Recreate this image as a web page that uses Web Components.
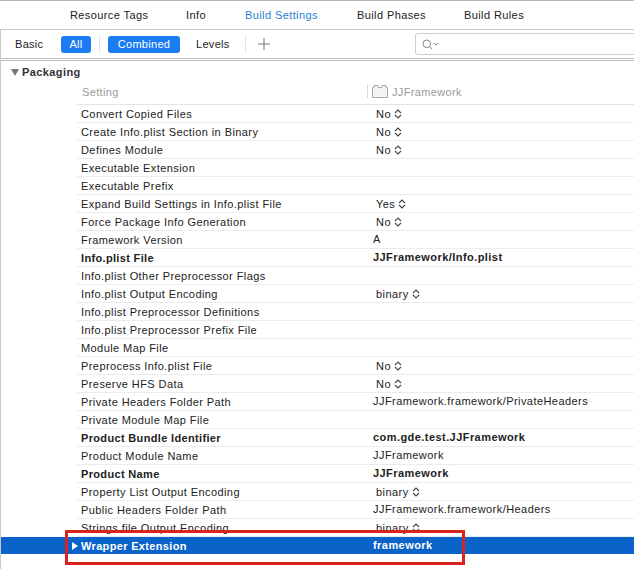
<!DOCTYPE html>
<html>
<head>
<meta charset="utf-8">
<style>
  html, body { margin: 0; background: #fff; }
  body { width: 634px; height: 569px; overflow: hidden; font-family: "Liberation Sans", Arial, sans-serif; font-size: 11px; color: #222; }
</style>
</head>
<body>
<build-settings>
  <tab-bar></tab-bar>
  <filter-bar></filter-bar>
  <settings-table></settings-table>
</build-settings>
<script>
const STEPPER = `<svg width="8" height="10" viewBox="0 0 8 10" fill="none" stroke="#444" stroke-width="1.1"><path d="M1 4L4 1L7 4M1 6L4 9L7 6"/></svg>`;

class BuildSettings extends HTMLElement {
  constructor() {
    super();
    this.attachShadow({ mode: "open" });
    this.shadowRoot.innerHTML = `
      <style>
        :host { display: block; position: relative; width: 634px; height: 569px; overflow: hidden; box-sizing: border-box; border-top: 1px solid #b5b5b5; }
        .mark { position: absolute; left: 65px; top: 529px; width: 400px; height: 35px; box-sizing: border-box; border: 3px solid #d9231f; }
      </style>
      <slot></slot>
      <div class="mark"></div>`;
  }
}

class TabBar extends HTMLElement {
  constructor() {
    super();
    this.attachShadow({ mode: "open" });
    this.shadowRoot.innerHTML = `
      <style>
        :host { display: block; height: 28px; border-bottom: 1px solid #c8c8c8; }
        .tabs { display: flex; padding-left: 70px; height: 28px; align-items: center; }
        span { letter-spacing: .4px; white-space: nowrap; }
        .on { color: #2a7fd0; }
      </style>
      <div class="tabs">
        <span style="width:116px">Resource Tags</span>
        <span style="width:59px">Info</span>
        <span class="on" style="width:112px">Build Settings</span>
        <span style="width:107px">Build Phases</span>
        <span>Build Rules</span>
      </div>`;
  }
}

class FilterBar extends HTMLElement {
  constructor() {
    super();
    this.attachShadow({ mode: "open" });
    this.shadowRoot.innerHTML = `
      <style>
        :host { display: flex; align-items: center; height: 31px; box-sizing: border-box; padding-left: 14px; border-left: 1px solid #c8c8c8; border-bottom: 3px double #bdbdbd; }
        span { letter-spacing: .3px; white-space: nowrap; }
        .pill { background: #1a7cf0; color: #fff; border-radius: 3px; height: 17px; line-height: 17px; text-align: center; box-sizing: border-box; }
        .sep { width: 1px; height: 16px; background: #e2e2e2; }
        .search { flex: 1; height: 22px; box-sizing: border-box; border: 1px solid #cfcfcf; border-right: 0; border-radius: 3px 0 0 3px; display: flex; align-items: center; padding-left: 6px; }
      </style>
      <span style="width:46px">Basic</span>
      <span class="pill" style="width:30px">All</span>
      <div class="sep" style="margin:0 8px"></div>
      <span class="pill" style="width:72px">Combined</span>
      <span style="margin-left:16px;width:50px">Levels</span>
      <div class="sep" style="margin-left:-1px"></div>
      <svg style="margin-left:12px" width="12" height="12" viewBox="0 0 12 12" stroke="#777" stroke-width="1"><path d="M6 0V12M0 6H12"/></svg>
      <div class="search" style="margin-left:145px">
        <svg width="17" height="11" viewBox="0 0 17 11" fill="none" stroke="#888" stroke-width="1"><circle cx="4.8" cy="4.8" r="3.8"/><path d="M7.5 7.5L10 10M12 4L14 6.2L16 4"/></svg>
      </div>`;
  }
}

class SettingRow extends HTMLElement {
  constructor() {
    super();
    this.attachShadow({ mode: "open" });
  }
  connectedCallback() {
    const val = this.getAttribute("value") || "";
    const stepper = this.hasAttribute("stepper");
    this.shadowRoot.innerHTML = `
      <style>
        :host { display: flex; height: 18px; box-sizing: border-box; align-items: center; margin-left: 76px; padding-left: 4px; border-bottom: 1px solid #ececec; white-space: nowrap; }
        :host([bold]) { font-weight: bold; }
        :host([selected]) { margin-left: 0; padding-left: 71px; background: #0a63c9; color: #fff; border-bottom: 0; height: 17px; }
        .name { width: 292px; letter-spacing: .42px; }
        :host([bold]) .name { letter-spacing: .34px; }
        .val { display: flex; align-items: center; gap: 3px; letter-spacing: .44px; padding-left: ${stepper ? 3 : 0}px; margin-bottom: ${stepper ? 0 : 2}px; }
        .tri { width: 0; height: 0; border-left: 6px solid #fff; border-top: 4px solid transparent; border-bottom: 4px solid transparent; margin-right: 3px; }
      </style>
      ${this.hasAttribute("selected") ? '<div class="tri"></div>' : ""}
      <div class="name"><slot></slot></div>
      <div class="val">${val}${stepper ? STEPPER : ""}</div>`;
  }
}

class SettingsTable extends HTMLElement {
  constructor() {
    super();
    this.attachShadow({ mode: "open" });
    const rows = [
      ["Convert Copied Files", "No", "s"],
      ["Create Info.plist Section in Binary", "No", "s"],
      ["Defines Module", "No", "s"],
      ["Executable Extension", ""],
      ["Executable Prefix", ""],
      ["Expand Build Settings in Info.plist File", "Yes", "s"],
      ["Force Package Info Generation", "No", "s"],
      ["Framework Version", "A"],
      ["Info.plist File", "JJFramework/Info.plist", "b"],
      ["Info.plist Other Preprocessor Flags", ""],
      ["Info.plist Output Encoding", "binary", "s"],
      ["Info.plist Preprocessor Definitions", ""],
      ["Info.plist Preprocessor Prefix File", ""],
      ["Module Map File", ""],
      ["Preprocess Info.plist File", "No", "s"],
      ["Preserve HFS Data", "No", "s"],
      ["Private Headers Folder Path", "JJFramework.framework/PrivateHeaders"],
      ["Private Module Map File", ""],
      ["Product Bundle Identifier", "com.gde.test.JJFramework", "b"],
      ["Product Module Name", "JJFramework"],
      ["Product Name", "JJFramework", "b"],
      ["Property List Output Encoding", "binary", "s"],
      ["Public Headers Folder Path", "JJFramework.framework/Headers"],
      ["Strings file Output Encoding", "binary", "s"],
      ["Wrapper Extension", "framework", "bx"],
    ];
    const html = rows.map(([name, val, f = ""]) => {
      const attrs = [];
      if (f.includes("s")) attrs.push("stepper");
      if (f.includes("b")) attrs.push("bold");
      if (f.includes("x")) attrs.push("selected");
      return `<setting-row value="${val}" ${attrs.join(" ")}>${name}</setting-row>`;
    }).join("");
    this.shadowRoot.innerHTML = `
      <style>
        :host { display: block; height: 510px; border-left: 1px solid #c8c8c8; padding-top: 1px; box-sizing: border-box; }
        .group { display: flex; align-items: center; height: 18px; box-sizing: border-box; padding: 2px 0 0 10px; gap: 3px; font-weight: bold; letter-spacing: .4px; color: #333; }
        .down { width: 0; height: 0; border-top: 7px solid #777; border-left: 4.5px solid transparent; border-right: 4.5px solid transparent; }
        .head { display: flex; align-items: center; height: 25px; padding-bottom: 1px; box-sizing: border-box; margin-left: 76px; padding-left: 5px; border-bottom: 1px solid #e4e4e4; color: #999; letter-spacing: .34px; }
        .head .l { width: 285px; }
        .head .c { display: flex; align-items: center; gap: 4px; border-left: 1px solid #d8d8d8; padding-left: 4px; }
      </style>
      <div class="group"><div class="down"></div>Packaging</div>
      <div class="head">
        <div class="l">Setting</div>
        <div class="c">
          <svg width="16" height="13" viewBox="0 0 16 13" fill="#f4f4f4" stroke="#aaa"><path d="M.5 12.5V2.5H2V.5H6V2.5H10V.5H14V2.5H15.5V12.5Z"/></svg>
          JJFramework
        </div>
      </div>
      ${html}`;
  }
}

customElements.define("build-settings", BuildSettings);
customElements.define("tab-bar", TabBar);
customElements.define("filter-bar", FilterBar);
customElements.define("setting-row", SettingRow);
customElements.define("settings-table", SettingsTable);
</script>
</body>
</html>
